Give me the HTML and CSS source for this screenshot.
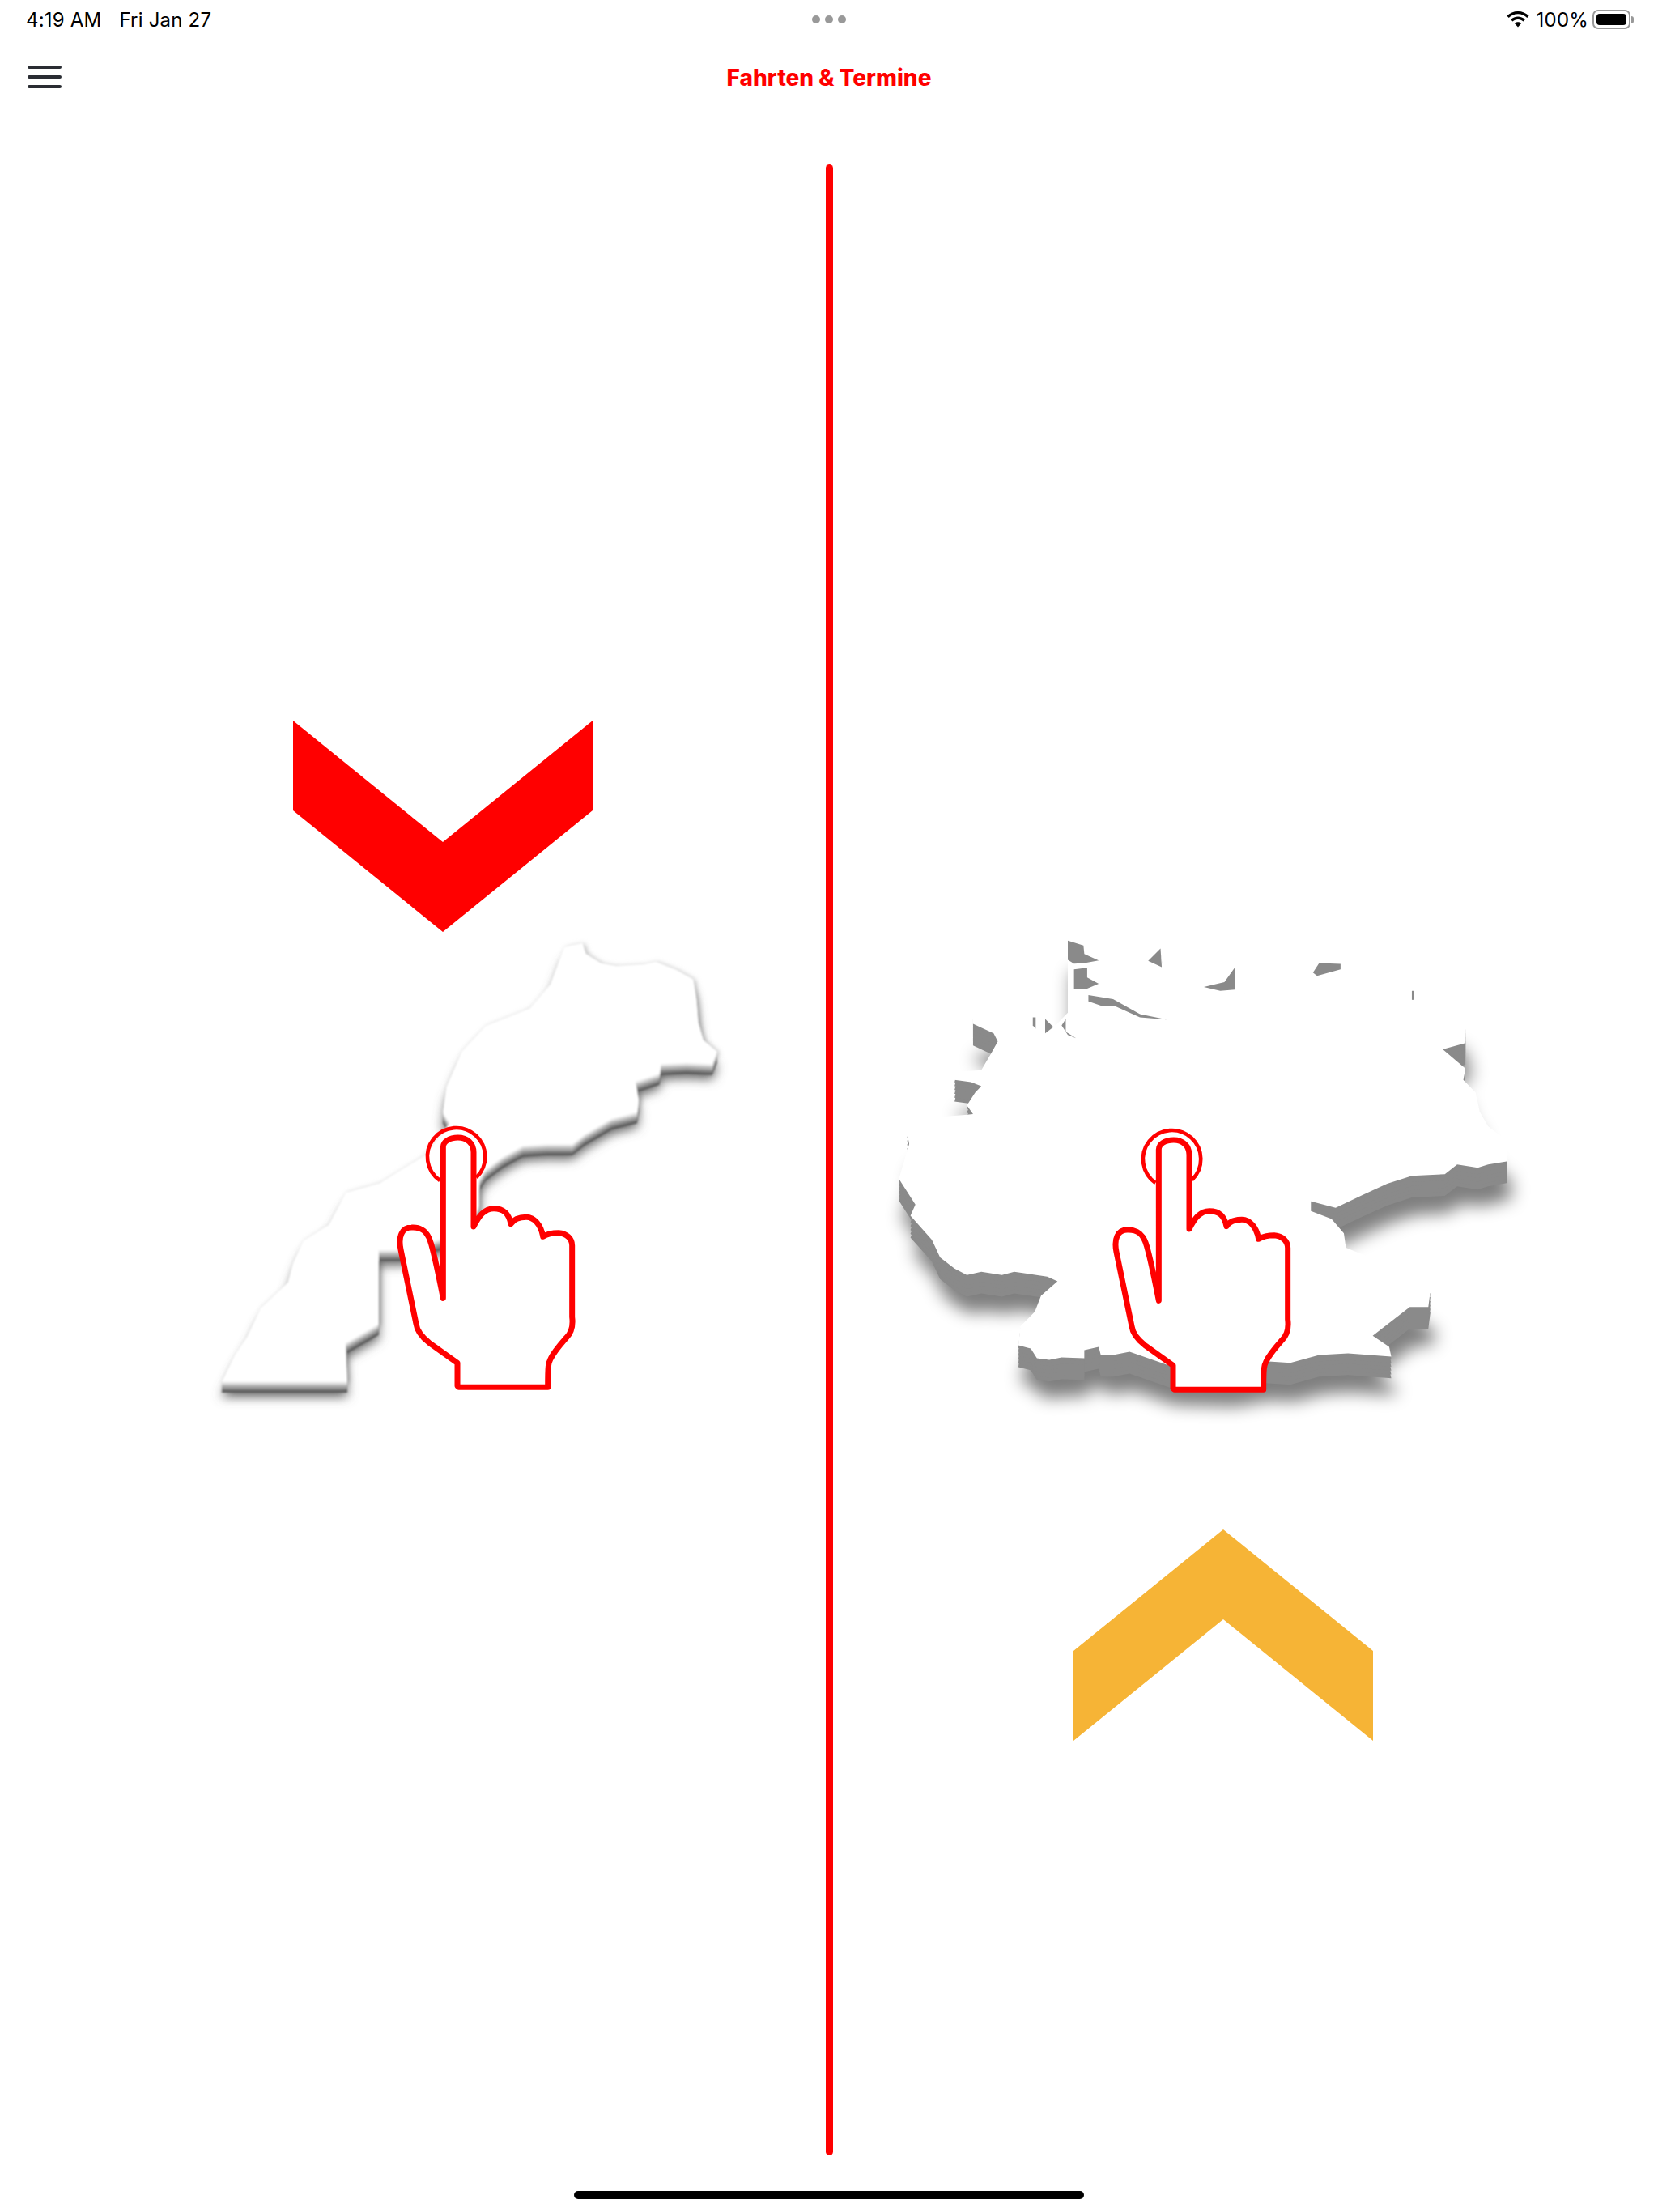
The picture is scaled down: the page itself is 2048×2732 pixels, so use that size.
FILE: index.html
```html
<!DOCTYPE html>
<html lang="de">
<head>
    <meta charset="UTF-8">
    <title>Fahrten &amp; Termine</title>
    <link rel="stylesheet" href="styles.css">
</head>
<body>
    <svg class="svg-defs" width="0" height="0">
        <symbol id="tap-hand" viewBox="0 0 840 1080">
            <path class="hand-ring" d="M250 264A107 107 0 1 1 385 253"/>
            <path class="hand-body" d="M262 700L262 140C262 120 285 105 317 105C350 105 375 125 375 160L375 435C395 395 415 368 450 368C485 368 505 385 513 425C525 405 550 400 570 400C600 400 625 430 632 472C650 460 670 458 690 458C720 460 740 480 740 505L740 770C745 810 735 830 720 845C700 868 675 895 660 925C652 940 650 950 650 1030L320 1030L315 1025L315 940L210 865C185 845 165 820 162 795L105 520C95 470 110 438 145 438C180 436 205 450 218 500C235 560 250 640 262 700Z"/>
        </symbol>
    </svg>

    <div class="status-bar">
        <div class="status-left">
            <span>4:19 AM</span>
            <span>Fri Jan 27</span>
        </div>
        <div class="status-dots"><i></i><i></i><i></i></div>
        <div class="status-right">
            <svg class="wifi" viewBox="0 0 28 20">
                <path d="M14 0C8.800 0 4 2 .4 5.500L2.700 8C5.700 5 9.700 3.300 14 3.300S22.300 5 25.300 8L27.600 5.500C24 2 19.200 0 14 0Z"/>
                <path d="M14 6.600C10.700 6.600 7.600 7.900 5.200 10.200L7.500 12.600C9.200 10.900 11.500 10 14 10S18.800 10.900 20.500 12.600L22.800 10.200C20.400 7.900 17.300 6.600 14 6.600Z"/>
                <path d="M14 13.200C12.400 13.200 11 13.800 9.900 14.900L14 19.400L18.100 14.900C17 13.800 15.600 13.200 14 13.200Z"/>
            </svg>
            <span>100%</span>
            <div class="battery"><div class="battery-level"></div></div>
            <div class="battery-nub"></div>
        </div>
    </div>

    <div class="nav-bar">
        <div class="menu-button"><i></i><i></i><i></i></div>
        <h1 class="nav-title">Fahrten &amp; Termine</h1>
    </div>

    <div class="split">
        <div class="pane pane-left">
            <svg class="chevron" viewBox="0 0 370 261">
                <polygon class="chevron-red" points="0,0 185,150 370,0 370,111 185,261 0,111"/>
            </svg>
            <div class="map map-morocco">
                <svg class="map-art" viewBox="0 0 1567 1565" preserveAspectRatio="none">
                    <defs>
                        <filter id="blur-halo" x="-10%" y="-10%" width="120%" height="120%"><feGaussianBlur stdDeviation="8"/></filter>
                        <filter id="blur-dark" x="-10%" y="-10%" width="120%" height="120%"><feGaussianBlur stdDeviation="16"/></filter>
                        <filter id="blur-fine" x="-10%" y="-10%" width="120%" height="120%"><feGaussianBlur stdDeviation="3"/></filter>
                        <path id="morocco" d="M1060 75L1085 68L1115 62L1125 95L1170 125L1215 133L1260 130L1295 128L1330 120L1390 145L1440 175L1450 240L1455 310L1470 365L1510 400L1495 440L1420 436L1345 440L1340 470L1270 495L1280 550L1275 590L1200 610L1120 660L1085 690L1010 690L940 695L880 730L830 770L812 800L812 880L780 960L590 1020L517 1020L517 1250L420 1310L425 1430L56 1430L95 1345L130 1290L170 1200L250 1120L265 1060L295 990L370 940L420 840L520 810L580 770L650 725L725 625L705 590L715 510L760 400L830 320L960 265L1020 190Z"/>
                    </defs>
                    <use href="#morocco" class="morocco-halo" transform="translate(6 3)"/>
                    <use href="#morocco" class="morocco-shadow" transform="translate(0 48)"/>
                    <g filter="url(#blur-fine)">
                        <use href="#morocco" class="morocco-step-1" transform="translate(0 34)"/>
                        <use href="#morocco" class="morocco-step-2" transform="translate(0 28)"/>
                        <use href="#morocco" class="morocco-step-3" transform="translate(0 22)"/>
                        <use href="#morocco" class="morocco-step-4" transform="translate(0 16)"/>
                        <use href="#morocco" class="morocco-step-5" transform="translate(0 10)"/>
                        <use href="#morocco" class="morocco-step-6" transform="translate(0 5)"/>
                        <use href="#morocco" class="morocco-land"/>
                    </g>
                </svg>
                <svg class="hand hand-morocco"><use href="#tap-hand" width="280" height="360"/></svg>
            </div>
        </div>

        <div class="divider"></div>

        <div class="pane pane-right">
            <div class="map map-germany">
                <svg class="map-art" viewBox="0 0 1572 1569" preserveAspectRatio="none">
                    <defs>
                        <filter id="blur-soft" x="-15%" y="-15%" width="130%" height="130%"><feGaussianBlur stdDeviation="22 26"/></filter>
                        <path id="germany" d="M450 28L600 45L675 80L680 130L745 130L790 165L850 140L855 205L880 222L915 222L945 175L1015 170L1045 140L1110 140L1180 165L1285 205L1290 245L1400 270L1415 325L1415 375L1360 395L1415 455L1410 490L1440 530L1450 590L1470 635L1515 680L1515 745L1470 755L1445 765L1395 755L1365 785L1285 790L1225 815L1165 850L1100 890L1040 870L1040 900L1090 925L1120 970L1125 1015L1230 1070L1330 1150L1325 1200L1280 1200L1240 1240L1190 1290L1230 1325L1235 1355L1130 1345L1060 1350L990 1375L930 1370L850 1390L700 1385L600 1340L560 1350L530 1350L525 1325L490 1335L490 1360L435 1358L405 1365L375 1360L360 1330L330 1320L335 1260L370 1215L385 1165L425 1120L400 1105L320 1090L290 1100L240 1090L205 1100L175 1080L140 1045L120 990L68 915L80 880L40 800L65 690L60 660L100 610L200 600L220 597L205 570L225 530L240 510L215 497L175 490L180 465L240 460L265 405L280 370L270 345L220 315L220 290L330 268L365 290L395 290L420 320L450 280L450 200L450 60Z"/>
                    </defs>
                    <use href="#germany" class="germany-shadow" transform="translate(10 122)"/>
                    <use href="#germany" class="germany-side" transform="translate(0 68)"/>
                    <use href="#germany" class="germany-side" transform="translate(0 56)"/>
                    <use href="#germany" class="germany-side" transform="translate(0 44)"/>
                    <use href="#germany" class="germany-side" transform="translate(0 32)"/>
                    <use href="#germany" class="germany-side" transform="translate(0 20)"/>
                    <use href="#germany" class="germany-side" transform="translate(0 8)"/>
                    <use href="#germany" class="germany-land"/>
                    <polygon class="germany-side" points="450,55 488,70 490,97 525,117 490,125 465,127 450,115"/>
                    <polygon class="germany-side" points="465,145 497,140 497,170 525,190 497,205 465,205"/>
                    <polygon class="germany-side" points="500,225 560,238 625,285 690,302 625,295 565,260 530,258 500,245"/>
                    <polygon class="germany-side" points="645,118 675,80 678,138"/>
                    <polygon class="germany-side" points="780,200 830,185 855,140 855,208 820,212"/>
                    <polygon class="germany-side" points="1045,155 1060,125 1112,128 1112,145 1055,165"/>
                    <polygon class="germany-side" points="1285,212 1290,212 1290,240 1285,240"/>
                    <polygon class="germany-side" points="365,295 372,295 372,330 365,320"/>
                    <polygon class="germany-side" points="395,300 415,325 395,345"/>
                    <polygon class="germany-side" points="435,320 445,300 445,340 470,360 450,350"/>
                </svg>
                <svg class="hand hand-germany"><use href="#tap-hand" width="280" height="360"/></svg>
            </div>
            <svg class="chevron" viewBox="0 0 370 261">
                <polygon class="chevron-amber" points="185,0 370,150 370,261 185,111 0,261 0,150"/>
            </svg>
        </div>
    </div>

    <div class="home-bar"><div class="home-indicator"></div></div>
</body>
</html>
```

FILE: styles.css
```css
body {
    display: flex;
    flex-direction: column;
    width: 2048px;
    height: 2732px;
    margin: 0;
    overflow: hidden;
    font-family: Inter, "Liberation Sans", sans-serif;
    background-color: white;
    color: black;
}

.svg-defs {
    position: absolute;
}

.status-bar {
    display: grid;
    grid-template-columns: 1fr auto 1fr;
    align-items: center;
    height: 48px;
    padding: 0 30px;
    font-size: 24px;
    letter-spacing: 0.2px;
}

.status-left {
    display: flex;
    gap: 22px;
    margin-left: 2px;
}

.status-dots {
    display: flex;
    gap: 6px;
}

.status-dots i {
    width: 10px;
    height: 10px;
    border-radius: 50%;
    background: #999;
}

.status-right {
    display: flex;
    justify-content: flex-end;
    align-items: center;
    gap: 5px;
}

.wifi {
    width: 28px;
    height: 20px;
    margin-right: 4px;
}

.battery {
    display: flex;
    width: 47px;
    height: 24px;
    padding: 3px;
    box-sizing: border-box;
    border: 2px solid #999;
    border-radius: 7px;
}

.battery-level {
    flex: 1;
    background: black;
    border-radius: 4px;
}

.battery-nub {
    width: 3px;
    height: 9px;
    margin-left: -4px;
    background: #999;
    border-radius: 0 3px 3px 0;
}

.nav-bar {
    display: flex;
    position: relative;
    justify-content: center;
    align-items: center;
    height: 96px;
}

.menu-button {
    display: flex;
    position: absolute;
    left: 34px;
    top: 33px;
    flex-direction: column;
    gap: 8px;
}

.menu-button i {
    width: 42px;
    height: 4px;
    background: #2a2d33;
    border-radius: 2px;
}

.nav-title {
    margin: 0;
    font-size: 28px;
    font-weight: 800;
    color: red;
}

.split {
    display: grid;
    grid-template-columns: 1020px 9px 1019px;
    flex: 1;
}

.divider {
    margin: 59px 0 0;
    height: 2459px;
    background: red;
    border-radius: 5px;
}

.pane {
    display: flex;
    flex-direction: column;
    align-items: flex-start;
}

.pane-left {
    padding: 746px 0 0 362px;
}

.pane-right {
    padding: 996px 0 0 61px;
}

.chevron {
    width: 370px;
    height: 261px;
}

.pane-right .chevron {
    margin: 129px 0 0 236px;
}

.chevron-red {
    fill: red;
}

.chevron-amber {
    fill: #f6b436;
}

.map {
    position: relative;
    height: 620px;
}

.map-morocco {
    width: 660px;
    margin: -11px 0 0 -112px;
}

.map-germany {
    width: 800px;
}

.map-art {
    display: block;
    width: 100%;
    height: 100%;
    overflow: visible;
}

.morocco-halo {
    fill: #bbb;
    filter: url(#blur-halo);
}

.morocco-shadow {
    fill: #666;
    filter: url(#blur-dark);
}

.morocco-step-1 {
    fill: #5c5c5c;
}

.morocco-step-2 {
    fill: #7a7a7a;
}

.morocco-step-3 {
    fill: #979797;
}

.morocco-step-4 {
    fill: #b5b5b5;
}

.morocco-step-5 {
    fill: #d2d2d2;
}

.morocco-step-6 {
    fill: #ececec;
}

.morocco-land {
    fill: white;
}

.germany-shadow {
    fill: #000;
    opacity: 0.5;
    filter: url(#blur-soft);
}

.germany-side {
    fill: #8a8a8a;
}

.germany-land {
    fill: white;
}

.hand {
    position: absolute;
    width: 280px;
    height: 360px;
}

.hand-morocco {
    left: 210px;
    top: 230px;
}

.hand-germany {
    left: 254px;
    top: 233px;
}

.hand-ring {
    fill: none;
    stroke: red;
    stroke-width: 14;
}

.hand-body {
    fill: white;
    stroke: red;
    stroke-width: 21;
    stroke-linejoin: round;
}

.home-bar {
    display: flex;
    position: absolute;
    left: 0;
    right: 0;
    bottom: 16px;
    justify-content: center;
}

.home-indicator {
    width: 630px;
    height: 10px;
    background: black;
    border-radius: 5px;
}
```
